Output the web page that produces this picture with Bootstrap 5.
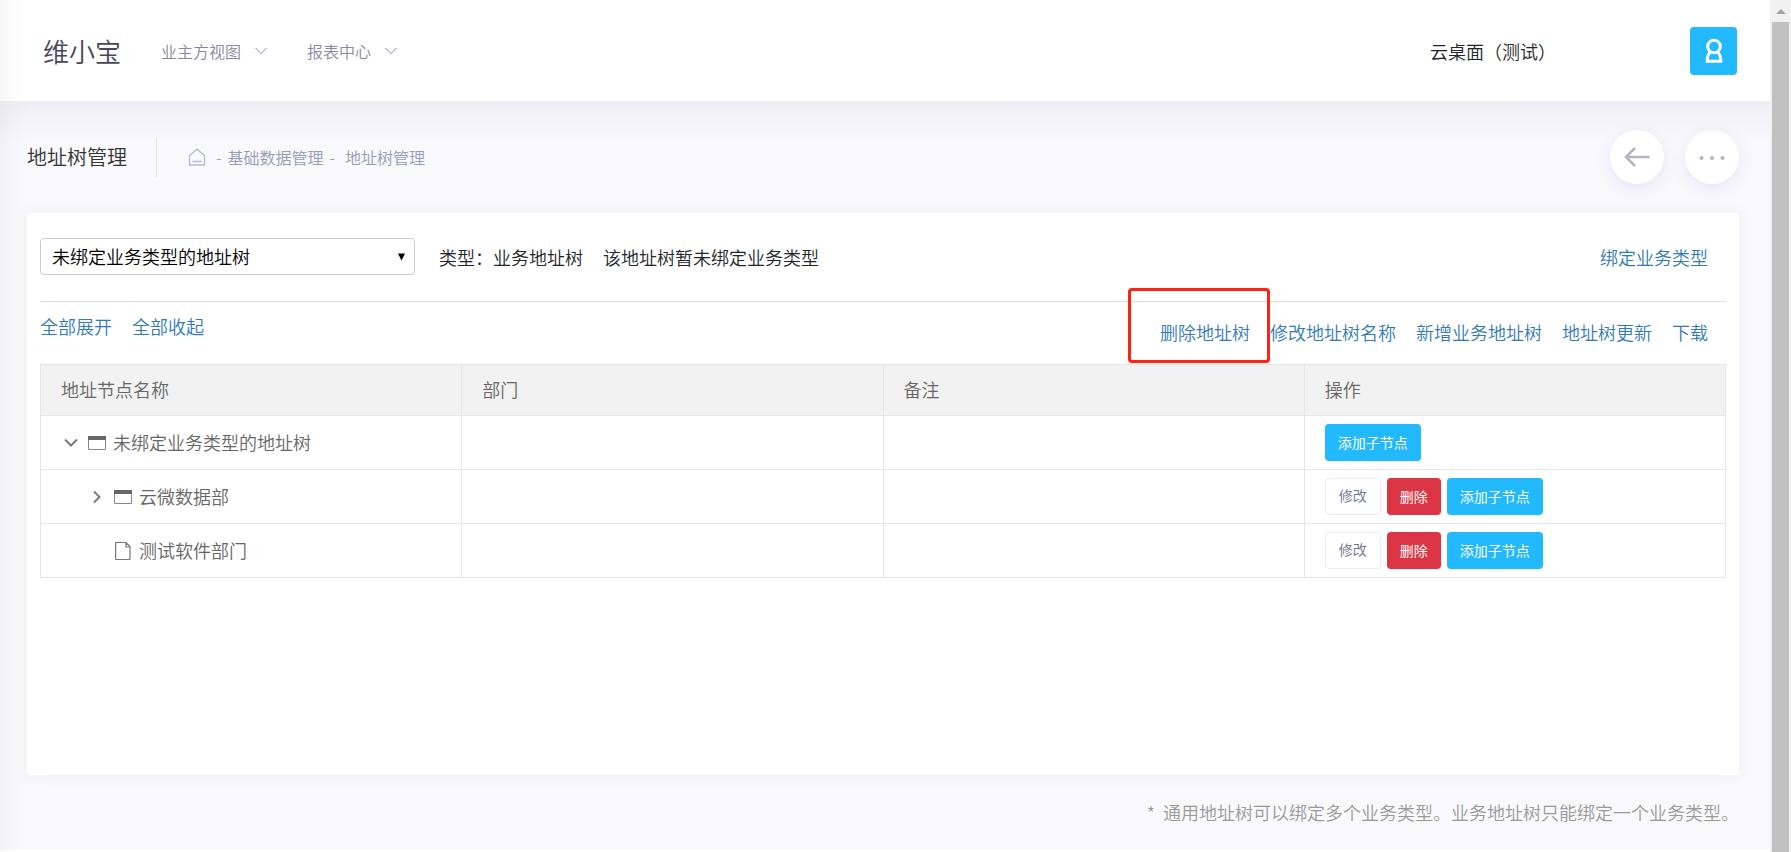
<!DOCTYPE html>
<html lang="zh-CN">
<head>
<meta charset="utf-8">
<meta name="viewport" content="width=device-width, initial-scale=1">
<title>地址树管理</title>
<link rel="stylesheet" href="https://cdn.jsdelivr.net/npm/bootstrap@5.3.0/dist/css/bootstrap.min.css">
<style>
body { font-family: "Noto Sans CJK SC", "Noto Sans", sans-serif; font-weight: 350; font-size: 18px; line-height: 26px; color: #212529; background: #fff; }
a { text-decoration: none; color: #337ab7; }
svg { display: block; flex: none; }
.page { min-width: 0; }
.page::before { content: ""; position: absolute; inset: 0 auto 0 0; width: 28px; z-index: 2; pointer-events: none; background: linear-gradient(90deg, rgba(82,63,105,.05), rgba(82,63,105,.02) 35%, rgba(82,63,105,0)); }
.topbar { height: 101px; padding: 0 33px 0 43px; }
.brand { font-size: 26px; line-height: 36px; color: #48465b; }
.menu-link { font-size: 16px; gap: 14px; color: #8b87a3; }
.avatar { width: 47px; height: 48px; background: #22b9ff; color: #fff; border-radius: 4px; }
.user-name { margin-right: 134px; }
.workspace { background: #f9f9fc; padding: 0 31px 24px 27px; background-image: linear-gradient(#efeef4, rgba(249,249,252,0) 40px); }
.subhead { height: 112px; }
.page-title { font-size: 20px; line-height: 28px; font-weight: 350; margin: 0; color: #333; }
.rule { width: 1px; height: 40px; background: #e0dfea; margin: 0 31px 0 29px; }
.crumbs { font-size: 16px; gap: 6px; color: #959cb6; }
.crumbs a { color: #959cb6; }
.round-btn { width: 54px; height: 54px; border-radius: 50%; background: #fff; color: #b5b5bf; box-shadow: 0 4px 16px rgba(93,83,207,.12); }
.round-set { gap: 21px; }
.panel { background: #fff; border-radius: 4px; min-height: 562px; padding: 25px 13px; box-shadow: 0 0 16px rgba(82,63,105,.06); }
.tree-select { width: 375px; height: 37px; padding: 0 32px 0 11px; font-size: 18px; font-weight: 350; color: #000; border: 1px solid #ccc; border-radius: 4px; background: #fff url("data:image/svg+xml,%3Csvg xmlns='http://www.w3.org/2000/svg' viewBox='0 0 8 8'%3E%3Cpath d='M0 0h8L4 8z'/%3E%3C/svg%3E") no-repeat right 9px center / 7px 8px; }
.filters { padding-bottom: 26px; border-bottom: 1px solid #ddd; }
.filters, .tools { padding-right: 18px; }
.binding { margin-left: 20px; }
.tools { height: 62px; }
.tools .start-links { padding-top: 11px; gap: 20px; }
.tools .end-links { padding-top: 17px; gap: 20px; }
.marker { position: absolute; inset: -31px -20px -18px -32px; border: 3px solid #ff2116; border-radius: 4px; pointer-events: none; }
.tree-table { table-layout: fixed; margin: 0; border-color: #e6e6e6; }
.tree-table th, .tree-table td { height: 54px; padding: 0 20px; vertical-align: middle; font-weight: 350; color: #666; }
.tree-table thead th { height: 51px; padding-bottom: 2px; background: #f2f2f2; }
.node { gap: 7px; }
.node-text { padding-bottom: 2px; }
.node-child { padding-left: 26px; }
.toggle { width: 20px; height: 20px; color: #7a7a7a; }
.actions { gap: 6px; }
.act { height: 37px; padding: 0 13px 2px; border: 0; border-radius: 4px; font-size: 14px; line-height: 34px; font-weight: 400; }
.act-add { background: #22b9ff; color: #fff; }
.act-del { background: #dc3545; color: #fff; padding-left: 13px; }
.act-edit { background: #fff; color: #6c7293; border: 1px solid #e8ecfa; line-height: 33px; font-weight: 350; }
.hint { color: #999; margin-top: 24px; }
.scroll-rail { width: 21px; height: 100vh; background: #f1f1f1; padding: 0 2px; }
.rail-up { height: 22px; color: #a3a3a3; }
.rail-thumb { background: #c1c1c1; }
</style>
</head>
<body class="d-flex">
<div class="page position-relative flex-grow-1">
  <header class="topbar d-flex align-items-center bg-white">
    <a class="brand" href="#">维小宝</a>
    <nav class="d-flex ms-4 ps-3">
      <a class="menu-link d-flex align-items-center me-4" href="#">业主方视图
        <svg width="12" height="8" viewBox="0 0 12 8" fill="none" stroke="currentColor"><path d="M.5 1 6 6.500 11.500 1"/></svg></a>
      <a class="menu-link d-flex align-items-center ms-3" href="#">报表中心
        <svg width="12" height="8" viewBox="0 0 12 8" fill="none" stroke="currentColor"><path d="M.5 1 6 6.500 11.500 1"/></svg></a>
    </nav>
    <span class="user-name ms-auto">云桌面（测试）</span>
    <button class="avatar btn p-0 d-flex align-items-center justify-content-center" aria-label="用户">
      <svg width="20" height="26" viewBox="0 0 20 26" fill="none" stroke="currentColor" stroke-width="3"><circle cx="10" cy="8.500" r="6.300"/><path d="M6.500 13.800C4 16 3.200 19 3.200 23.300H16.800C16.800 19 16 16 13.500 13.800"/></svg>
    </button>
  </header>
  <main class="workspace">
    <div class="subhead d-flex align-items-center">
      <h1 class="page-title">地址树管理</h1>
      <span class="rule"></span>
      <nav class="crumbs d-flex align-items-center">
        <a class="me-1" href="#" aria-label="首页"><svg width="18" height="18" viewBox="0 0 18 18" fill="none" stroke="#b4b9e0" stroke-width="1.300"><path d="M1.500 17V7.500L9 1.200l7.500 6.300V17zM4.500 13.500h9"/></svg></a>
        <span>-</span><a href="#">基础数据管理</a><span>-</span><a class="ms-1" href="#">地址树管理</a>
      </nav>
      <div class="round-set d-flex ms-auto">
        <button class="round-btn btn p-0 d-flex align-items-center justify-content-center" aria-label="返回"><svg width="26" height="20" viewBox="0 0 26 20" fill="none" stroke="currentColor" stroke-width="2.500"><path d="M25.500 10H2M11 1 2 10l9 9"/></svg></button>
        <button class="round-btn btn p-0 d-flex align-items-center justify-content-center" aria-label="更多"><svg width="26" height="6" viewBox="0 0 26 6" fill="currentColor"><circle cx="2.500" cy="4" r="2"/><circle cx="13" cy="4" r="2"/><circle cx="23.500" cy="4" r="2"/></svg></button>
      </div>
    </div>
    <section class="panel">
      <div class="filters d-flex align-items-center">
        <select class="tree-select form-select" aria-label="地址树"><option>未绑定业务类型的地址树</option></select>
        <span class="ms-4">类型：业务地址树</span>
        <span class="binding">该地址树暂未绑定业务类型</span>
        <a class="ms-auto" href="#">绑定业务类型</a>
      </div>
      <div class="tools d-flex">
        <div class="start-links d-flex"><a href="#">全部展开</a><a href="#">全部收起</a></div>
        <div class="end-links d-flex align-items-start ms-auto">
          <a class="position-relative" href="#">删除地址树<span class="marker"></span></a>
          <a href="#">修改地址树名称</a><a href="#">新增业务地址树</a><a href="#">地址树更新</a><a href="#">下载</a>
        </div>
      </div>
      <table class="tree-table table table-bordered">
        <thead><tr><th scope="col">地址节点名称</th><th scope="col">部门</th><th scope="col">备注</th><th scope="col">操作</th></tr></thead>
        <tbody>
          <tr>
            <td><div class="node d-flex align-items-center">
              <button class="toggle btn p-0 border-0 d-flex align-items-center justify-content-center" aria-label="收起"><svg width="14" height="10" viewBox="0 0 14 10" fill="none" stroke="currentColor" stroke-width="2"><path d="m1 1.500 6 6 6-6"/></svg></button>
              <svg width="18" height="14" viewBox="0 0 18 14"><path d="M.5.5h17v13H.5z" fill="none" stroke="#888"/><path d="M0 0h18v4H0z" fill="#666"/></svg>
              <span class="node-text">未绑定业务类型的地址树</span></div></td>
            <td></td><td></td>
            <td><div class="actions d-flex"><button class="act act-add btn">添加子节点</button></div></td>
          </tr>
          <tr>
            <td><div class="node node-child d-flex align-items-center">
              <button class="toggle btn p-0 border-0 d-flex align-items-center justify-content-center" aria-label="展开"><svg width="10" height="14" viewBox="0 0 10 14" fill="none" stroke="currentColor" stroke-width="2"><path d="m2 1.500 5.500 5.500L2 12.500"/></svg></button>
              <svg width="18" height="14" viewBox="0 0 18 14"><path d="M.5.5h17v13H.5z" fill="none" stroke="#888"/><path d="M0 0h18v4H0z" fill="#666"/></svg>
              <span class="node-text">云微数据部</span></div></td>
            <td></td><td></td>
            <td><div class="actions d-flex"><button class="act act-edit btn">修改</button><button class="act act-del btn">删除</button><button class="act act-add btn">添加子节点</button></div></td>
          </tr>
          <tr>
            <td><div class="node node-child d-flex align-items-center">
              <span class="toggle"></span>
              <svg width="18" height="18" viewBox="0 0 18 18" fill="none" stroke="#777" stroke-width="1.200"><path d="M1.600 1.500q0-1 1-1H12l4 4v12q0 1-1 1H2.600q-1 0-1-1zM12 .5v4.500h4"/></svg>
              <span class="node-text">测试软件部门</span></div></td>
            <td></td><td></td>
            <td><div class="actions d-flex"><button class="act act-edit btn">修改</button><button class="act act-del btn">删除</button><button class="act act-add btn">添加子节点</button></div></td>
          </tr>
        </tbody>
      </table>
    </section>
    <p class="hint text-end mb-0">*&nbsp; 通用地址树可以绑定多个业务类型。业务地址树只能绑定一个业务类型。</p>
  </main>
</div>
<div class="scroll-rail d-flex flex-column flex-shrink-0" aria-hidden="true">
  <div class="rail-up d-flex justify-content-center align-items-center"><svg width="10" height="5" viewBox="0 0 10 5" fill="currentColor"><path d="M0 5 5 0l5 5z"/></svg></div>
  <div class="rail-thumb flex-grow-1"></div>
</div>
<script src="https://cdn.jsdelivr.net/npm/bootstrap@5.3.0/dist/js/bootstrap.bundle.min.js"></script>
</body>
</html>
